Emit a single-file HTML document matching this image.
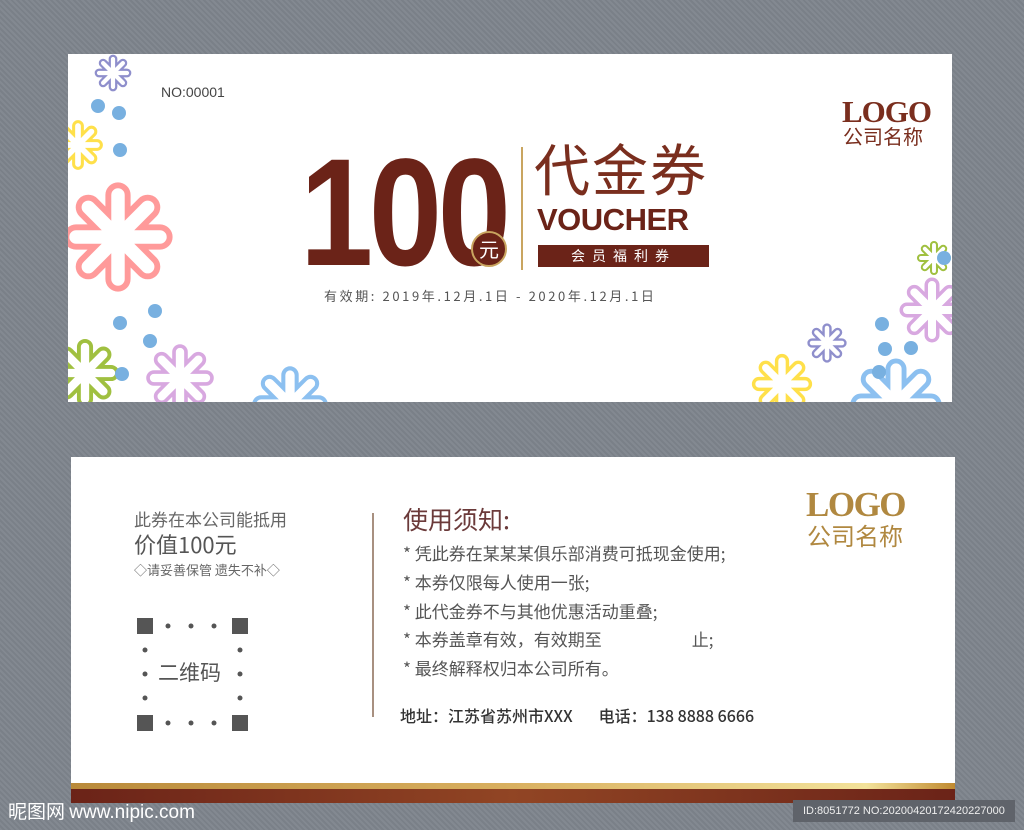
<!DOCTYPE html>
<html><head><meta charset="utf-8"><style>
*{margin:0;padding:0;box-sizing:border-box}
body{width:1024px;height:830px;overflow:hidden;position:relative;font-family:"Liberation Sans","Noto Sans CJK SC",sans-serif;
background:repeating-linear-gradient(45deg,#838991 0 2px,#7a8088 2px 4px);}
.card{position:absolute;background:#fff;overflow:hidden}
.t{position:absolute;white-space:nowrap;line-height:1}
</style></head><body>
<svg width="0" height="0" style="position:absolute">
<defs>
<g id="rays"><path d="M0 0L0 -1M0 0L0.707 -0.707M0 0L1 0M0 0L0.707 0.707M0 0L0 1M0 0L-0.707 0.707M0 0L-1 0M0 0L-0.707 -0.707"/></g>
</defs>
</svg>

<div class="card" style="left:68px;top:54px;width:884px;height:348px">
<svg width="884" height="348" style="position:absolute;left:0;top:0">
<g stroke-linecap="round" fill="none">
<g transform="translate(45,19) scale(14)"><use href="#rays" stroke="#8f8fcc" stroke-width="0.62"/><use href="#rays" stroke="#fff" stroke-width="0.3"/></g>
<g transform="translate(10,91) scale(19)"><use href="#rays" stroke="#ffe04a" stroke-width="0.62"/><use href="#rays" stroke="#fff" stroke-width="0.3"/></g>
<g transform="translate(50,183) scale(42)"><use href="#rays" stroke="#ff9a9a" stroke-width="0.6"/><use href="#rays" stroke="#fff" stroke-width="0.32"/></g>
<g transform="translate(17,319) scale(26)"><use href="#rays" stroke="#a0c040" stroke-width="0.62"/><use href="#rays" stroke="#fff" stroke-width="0.32"/></g>
<g transform="translate(112,324) scale(26)"><use href="#rays" stroke="#d8a8e0" stroke-width="0.6"/><use href="#rays" stroke="#fff" stroke-width="0.32"/></g>
<g transform="translate(222,350) scale(29)"><use href="#rays" stroke="#8cc0f0" stroke-width="0.6"/><use href="#rays" stroke="#fff" stroke-width="0.32"/></g>
<g transform="translate(866,204) scale(13)"><use href="#rays" stroke="#a0c040" stroke-width="0.62"/><use href="#rays" stroke="#fff" stroke-width="0.3"/></g>
<g transform="translate(864,256) scale(25)"><use href="#rays" stroke="#d8a8e0" stroke-width="0.6"/><use href="#rays" stroke="#fff" stroke-width="0.32"/></g>
<g transform="translate(759,289) scale(15)"><use href="#rays" stroke="#8f8fcc" stroke-width="0.62"/><use href="#rays" stroke="#fff" stroke-width="0.3"/></g>
<g transform="translate(714,330) scale(23)"><use href="#rays" stroke="#ffe04a" stroke-width="0.62"/><use href="#rays" stroke="#fff" stroke-width="0.32"/></g>
<g transform="translate(828,350) scale(35)"><use href="#rays" stroke="#8cc0f0" stroke-width="0.6"/><use href="#rays" stroke="#fff" stroke-width="0.32"/></g>
</g>
<g fill="#78b0e0">
<circle cx="30" cy="52" r="7"/><circle cx="51" cy="59" r="7"/><circle cx="52" cy="96" r="7"/>
<circle cx="87" cy="257" r="7"/><circle cx="52" cy="269" r="7"/><circle cx="82" cy="287" r="7"/><circle cx="54" cy="320" r="7"/>
<circle cx="814" cy="270" r="7"/><circle cx="817" cy="295" r="7"/><circle cx="843" cy="294" r="7"/><circle cx="811" cy="318" r="7"/><circle cx="876" cy="204" r="7"/>
</g>
</svg>
<div class="t" style="left:93px;top:31px;font-size:14px;color:#444">NO:00001</div>
<div class="t" style="left:232px;top:82px;font-size:153px;font-weight:bold;letter-spacing:-5px;color:#6b2318;transform:scaleX(0.86);transform-origin:0 0;font-family:'Liberation Sans Narrow','Liberation Sans',sans-serif">100</div>
<div style="position:absolute;left:403px;top:177px;width:36px;height:36px;border-radius:50%;background:#6b2318;border:2px solid #c9a560;color:#fff;font-size:20px;text-align:center;line-height:31px;font-family:'Noto Sans CJK SC',sans-serif">元</div>
<div style="position:absolute;left:453px;top:93px;width:2px;height:123px;background:#c9a560"></div>
<div class="t" style="left:466px;top:86px;font-size:56px;color:#7a2e1e;font-family:'Noto Sans CJK SC',sans-serif;letter-spacing:2px">代金券</div>
<div class="t" style="left:469px;top:150px;font-size:31px;font-weight:bold;color:#6b2318;letter-spacing:-0.5px">VOUCHER</div>
<div style="position:absolute;left:470px;top:191px;width:171px;height:22px;background:#6b2318;color:#fff;font-size:14px;text-align:center;line-height:22px;letter-spacing:7px;font-family:'Noto Sans CJK SC',sans-serif">会员福利券</div>
<div class="t" style="left:256px;top:235px;font-size:13px;color:#555;letter-spacing:2.6px;font-family:'Noto Sans CJK SC',sans-serif">有效期: 2019年.12月.1日 - 2020年.12月.1日</div>
<div class="t" style="left:774px;top:42px;font-size:31px;font-weight:bold;color:#7a2e1e;font-family:'Liberation Serif',serif;letter-spacing:-1px">LOGO</div>
<div class="t" style="left:775px;top:72px;font-size:20px;color:#7a2e1e;font-family:'Noto Sans CJK SC',sans-serif">公司名称</div>
</div>

<div class="card" style="left:71px;top:457px;width:884px;height:346px">
<div class="t" style="left:63px;top:53px;font-size:17px;color:#666;font-family:'Noto Sans CJK SC',sans-serif">此券在本公司能抵用</div>
<div class="t" style="left:63px;top:76px;font-size:22px;color:#555;font-family:'Noto Sans CJK SC',sans-serif">价值100元</div>
<div class="t" style="left:63px;top:106px;font-size:13px;color:#666;font-family:'Noto Sans CJK SC',sans-serif">◇请妥善保管 遗失不补◇</div>
<svg width="120" height="120" style="position:absolute;left:64px;top:159px">
<g fill="#555"><rect x="2" y="2" width="16" height="16"/><rect x="97" y="2" width="16" height="16"/><rect x="2" y="99" width="16" height="16"/><rect x="97" y="99" width="16" height="16"/>
<circle cx="33" cy="10" r="2.5"/><circle cx="56" cy="10" r="2.5"/><circle cx="79" cy="10" r="2.5"/>
<circle cx="33" cy="107" r="2.5"/><circle cx="56" cy="107" r="2.5"/><circle cx="79" cy="107" r="2.5"/>
<circle cx="10" cy="34" r="2.5"/><circle cx="10" cy="58" r="2.5"/><circle cx="10" cy="82" r="2.5"/>
<circle cx="105" cy="34" r="2.5"/><circle cx="105" cy="58" r="2.5"/><circle cx="105" cy="82" r="2.5"/></g>
</svg>
<div class="t" style="left:87px;top:205px;font-size:21px;color:#555;font-family:'Noto Sans CJK SC',sans-serif">二维码</div>
<div style="position:absolute;left:301px;top:56px;width:2px;height:204px;background:#a89080"></div>
<div class="t" style="left:332px;top:50px;font-size:25px;color:#6b3a3a;font-family:'Noto Sans CJK SC',sans-serif">使用须知:</div>
<div style="position:absolute;left:332px;top:82px;font-size:17px;color:#555;line-height:28.8px;font-family:'Noto Sans CJK SC',sans-serif">
<div>* 凭此券在某某某俱乐部消费可抵现金使用;</div>
<div>* 本券仅限每人使用一张;</div>
<div>* 此代金券不与其他优惠活动重叠;</div>
<div>* 本券盖章有效，有效期至<span style="display:inline-block;width:90px"></span>止;</div>
<div>* 最终解释权归本公司所有。</div>
</div>
<div class="t" style="left:329px;top:250px;font-size:16px;color:#333;font-weight:500;font-family:'Noto Sans CJK SC',sans-serif">地址：江苏省苏州市XXX<span style="display:inline-block;width:26px"></span>电话：138 8888 6666</div>
<div class="t" style="left:735px;top:30px;font-size:35px;font-weight:bold;color:#b08840;font-family:'Liberation Serif',serif;letter-spacing:-1.5px">LOGO</div>
<div class="t" style="left:736px;top:66px;font-size:24px;color:#b08840;font-family:'Noto Sans CJK SC',sans-serif">公司名称</div>
<div style="position:absolute;left:0;top:326px;width:884px;height:6px;background:linear-gradient(90deg,#b98a3a,#d9b060 50%,#f3e29a 90%,#c08a30)"></div>
<div style="position:absolute;left:0;top:332px;width:884px;height:14px;background:linear-gradient(90deg,#6b2318,#914524 50%,#6b2318)"></div>
</div>

<div class="t" style="left:8px;top:801px;font-size:19px;color:#fff;font-family:'Noto Sans CJK SC',sans-serif">昵图网 <span style="font-family:'Liberation Sans Narrow','Liberation Sans',sans-serif">www.nipic.com</span></div>
<div style="position:absolute;left:793px;top:800px;width:222px;height:22px;background:#5f636a;color:#eee;font-size:11px;line-height:22px;padding-left:10px;font-family:'Liberation Sans Narrow','Liberation Sans',sans-serif">ID:8051772 NO:20200420172420227000</div>
</body></html>
